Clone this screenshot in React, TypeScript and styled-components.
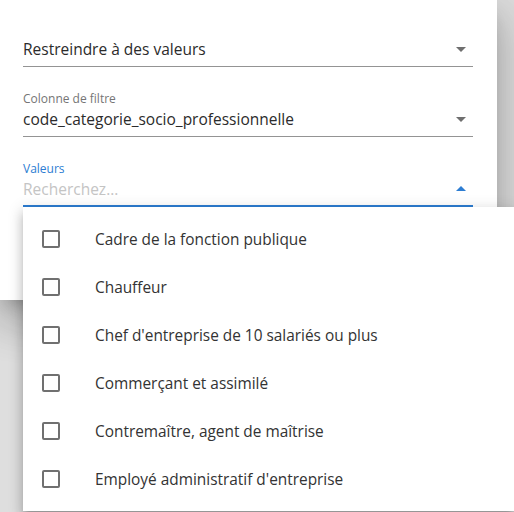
import React from "react";
import styled, { createGlobalStyle } from "styled-components";

const GlobalStyle = createGlobalStyle`
  html, body {
    margin: 0;
    padding: 0;
    background: #dedede;
    font-family: "Open Sans", Lato, sans-serif;
    overflow: hidden;
  }
`;

const options = [
  "Cadre de la fonction publique",
  "Chauffeur",
  "Chef d'entreprise de 10 salariés ou plus",
  "Commerçant et assimilé",
  "Contremaître, agent de maîtrise",
  "Employé administratif d'entreprise",
];

const Caret = ({ up, color }: { up?: boolean; color: string }) => (
  <svg width="10" height="5" viewBox="0 0 10 5">
    <path d={up ? "M0 5L5 0L10 5Z" : "M0 0L5 5L10 0Z"} fill={color} />
  </svg>
);

const App = () => {
  return (
    <Page>
      <GlobalStyle />
      <Dialog>
        <Field>
          <Control>
            <Value>Restreindre à des valeurs</Value>
            <Caret color="#6f6f6f" />
          </Control>
        </Field>
        <Field>
          <Label>Colonne de filtre</Label>
          <Control>
            <Value>code_categorie_socio_professionnelle</Value>
            <Caret color="#6f6f6f" />
          </Control>
        </Field>
        <Field>
          <Label $focused>Valeurs</Label>
          <Control $focused>
            <Value $placeholder>Recherchez...</Value>
            <Caret up color="#2d7dd2" />
          </Control>
          <Menu>
            {options.map((o) => (
              <Option key={o}>
                <Box />
                <OptionText>{o}</OptionText>
              </Option>
            ))}
          </Menu>
        </Field>
      </Dialog>
    </Page>
  );
};

export default App;

const Page = styled.div`
  width: 514px;
  height: 512px;
  position: relative;
`;

const Dialog = styled.div`
  width: 497px;
  height: 300px;
  box-sizing: border-box;
  padding: 32px 24px 0 23px;
  background: #fff;
  display: flex;
  flex-direction: column;
  gap: 25px;
  box-shadow: 0 11px 15px -7px rgba(0, 0, 0, 0.2),
    0 24px 38px 3px rgba(0, 0, 0, 0.14), 0 9px 46px 8px rgba(0, 0, 0, 0.12);
`;

const Field = styled.div`
  position: relative;
  display: flex;
  flex-direction: column;
`;

const Label = styled.div<{ $focused?: boolean }>`
  font-size: 12px;
  line-height: 14px;
  margin-bottom: -4px;
  color: ${(p) => (p.$focused ? "#2d7dd2" : "#757575")};
`;

const Control = styled.div<{ $focused?: boolean }>`
  height: 35px;
  display: flex;
  align-items: center;
  justify-content: space-between;
  padding: 0 7px 0 0;
  border-bottom: ${(p) => (p.$focused ? "2px solid #2d7dd2" : "1px solid #949494")};
  box-sizing: border-box;
`;

const Value = styled.span<{ $placeholder?: boolean }>`
  font-size: 15.5px;
  color: ${(p) => (p.$placeholder ? "#c4c4c4" : "#2b2b2b")};
`;

const Menu = styled.div`
  position: absolute;
  top: 100%;
  left: 0;
  width: 491px;
  padding: 8px 0;
  background: #fff;
  z-index: 2;
  box-shadow: 0 5px 5px -3px rgba(0, 0, 0, 0.2),
    0 8px 10px 1px rgba(0, 0, 0, 0.14), 0 3px 14px 2px rgba(0, 0, 0, 0.12);
`;

const Option = styled.div`
  height: 48px;
  display: flex;
  align-items: center;
  padding-left: 19px;
  gap: 35px;
`;

const Box = styled.span`
  width: 18px;
  height: 18px;
  box-sizing: border-box;
  border: 2px solid #707070;
  border-radius: 2px;
  flex: none;
`;

const OptionText = styled.span`
  font-size: 15.4px;
  color: #333;
`;
